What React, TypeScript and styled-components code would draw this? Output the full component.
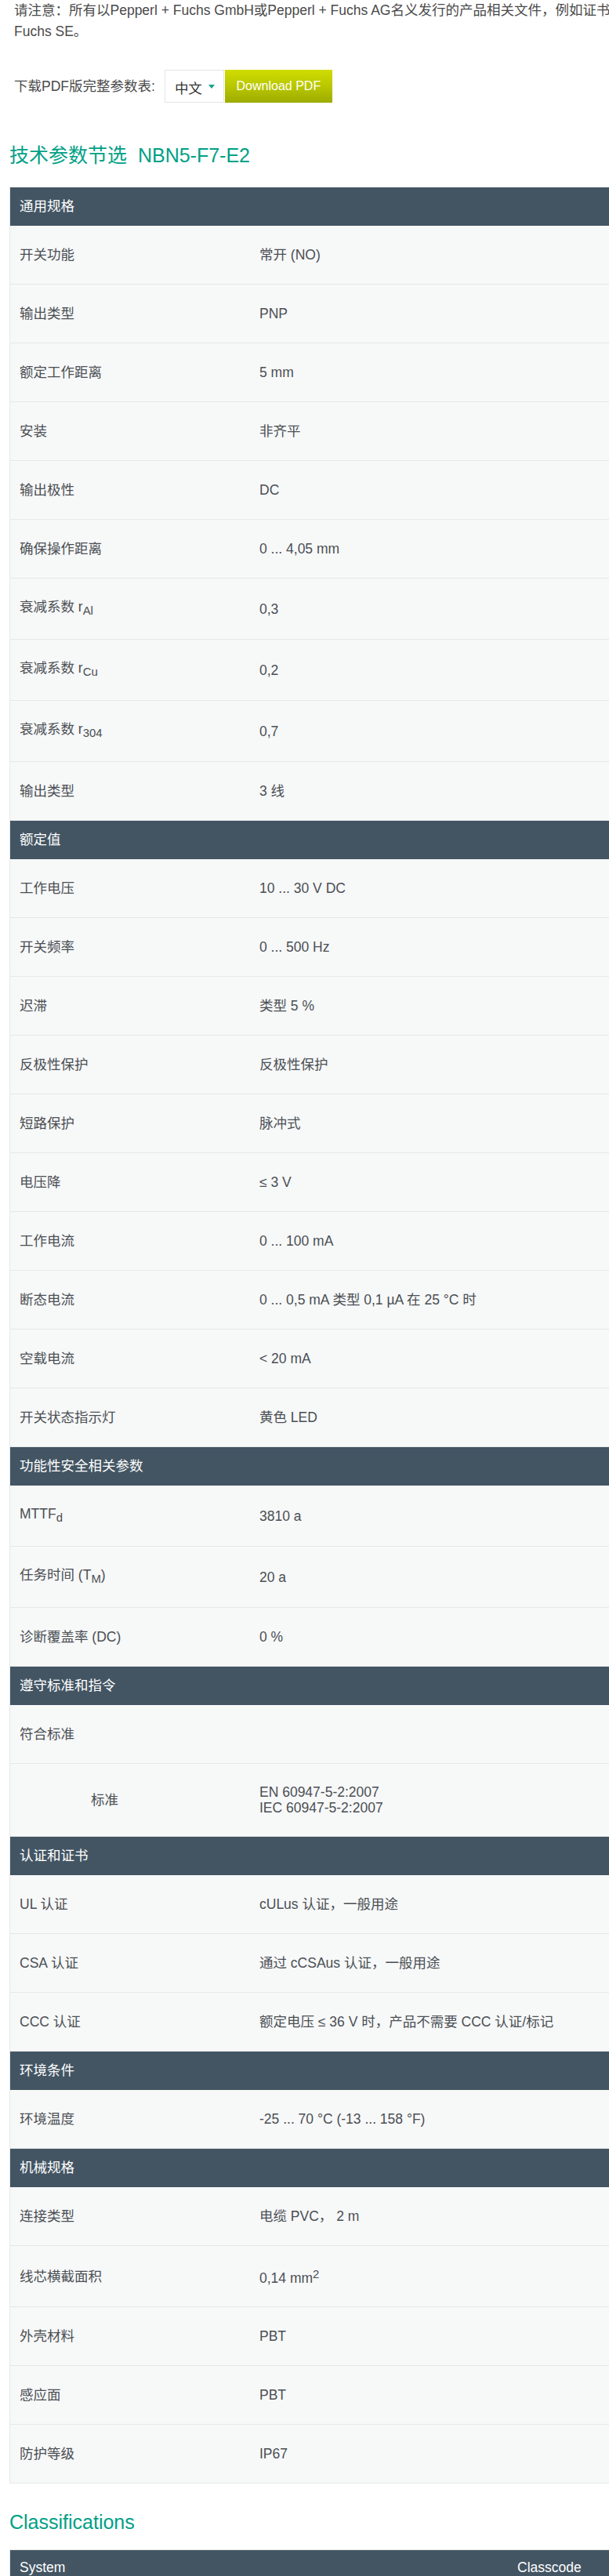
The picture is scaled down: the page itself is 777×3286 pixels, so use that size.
import React from 'react';
import styled, { createGlobalStyle } from 'styled-components';

const GlobalStyle = createGlobalStyle`
  html, body {
    margin: 0;
    padding: 0;
    overflow-x: hidden;
    background: #fff;
  }
  body {
    font-family: "Liberation Sans", "Noto Sans CJK SC", Arial, sans-serif;
    font-size: 17.5px;
    color: #4a4f54;
  }
`;

const Page = styled.div`
  width: 1000px;
  padding: 0 12px 40px;
`;

const Notice = styled.p`
  margin: 0 0 0 6px;
  line-height: 27px;
  white-space: nowrap;
  color: #4a4a4a;
`;

const DownloadRow = styled.div`
  display: flex;
  align-items: center;
  margin: 35px 0 0 6px;
`;

const DownloadLabel = styled.span`
  color: #4a4a4a;
  margin-right: 12px;
  margin-top: -3px;
`;

const LangSelect = styled.div`
  box-sizing: border-box;
  width: 76px;
  height: 42px;
  border: 1px solid #e4e4e4;
  background: #fff;
  display: flex;
  align-items: center;
  padding: 3px 0 0 12px;
  color: #333;
`;

const LangArrow = styled.span`
  width: 0;
  height: 0;
  margin-left: 8px;
  margin-top: -3px;
  border-left: 4px solid transparent;
  border-right: 4px solid transparent;
  border-top: 5px solid #17a08b;
`;

const DownloadButton = styled.button`
  box-sizing: border-box;
  width: 137px;
  height: 42px;
  margin-left: 1px;
  border: none;
  background: linear-gradient(to bottom, #d0dc00 0%, #b9c700 50%, #9dab00 100%);
  color: #fff;
  font-family: "Liberation Sans", Arial, sans-serif;
  font-size: 16px;
  cursor: pointer;
`;

const SectionTitle = styled.h2<{ $top: number; $bottom: number }>`
  margin: ${(p) => p.$top}px 0 ${(p) => p.$bottom}px;
  font-size: 25px;
  line-height: 30px;
  font-weight: normal;
  color: #00a085;
`;

const SpecTable = styled.div`
  border: 1px solid #e6e8e9;
  border-top: none;
  background: #f7f8f8;
`;

const GroupHeader = styled.div`
  background: #435563;
  color: #fff;
  padding: 14px 12px 15px;
  line-height: 20px;
`;

const SpecRow = styled.div`
  display: grid;
  grid-template-columns: 306px 1fr;
  align-items: center;
  min-height: 74px;
  border-bottom: 1px solid #e6e8e9;
  &:last-child {
    border-bottom: none;
  }
`;

const Cell = styled.div<{ $indent?: number }>`
  padding: 26px 12px 26px ${(p) => 12 + (p.$indent || 0)}px;
  line-height: 20px;
  color: #4a4f54;

  sub {
    font-size: 85%;
    vertical-align: -4px;
  }
  sup {
    font-size: 85%;
    vertical-align: 6px;
  }
`;

const ClassHeader = styled.div`
  display: grid;
  grid-template-columns: 635px 1fr;
  background: #435563;
  color: #fff;
  line-height: 20px;
  border: 1px solid #e6e8e9;
  border-bottom: none;
`;

const ClassHeadCell = styled.div`
  padding: 12px 12px 17px;
`;

type Row = { label: React.ReactNode; value?: React.ReactNode; indent?: number };
type Group = { title: string; rows: Row[] };

const groups: Group[] = [
  {
    title: '通用规格',
    rows: [
      { label: '开关功能', value: '常开 (NO)' },
      { label: '输出类型', value: 'PNP' },
      { label: '额定工作距离', value: '5 mm' },
      { label: '安装', value: '非齐平' },
      { label: '输出极性', value: 'DC' },
      { label: '确保操作距离', value: '0 ... 4,05 mm' },
      { label: <>衰减系数 r<sub>Al</sub></>, value: '0,3' },
      { label: <>衰减系数 r<sub>Cu</sub></>, value: '0,2' },
      { label: <>衰减系数 r<sub>304</sub></>, value: '0,7' },
      { label: '输出类型', value: '3 线' },
    ],
  },
  {
    title: '额定值',
    rows: [
      { label: '工作电压', value: '10 ... 30 V DC' },
      { label: '开关频率', value: '0 ... 500 Hz' },
      { label: '迟滞', value: '类型 5 %' },
      { label: '反极性保护', value: '反极性保护' },
      { label: '短路保护', value: '脉冲式' },
      { label: '电压降', value: '≤ 3 V' },
      { label: '工作电流', value: '0 ... 100 mA' },
      { label: '断态电流', value: '0 ... 0,5 mA 类型 0,1 µA 在 25 °C 时' },
      { label: '空载电流', value: '< 20 mA' },
      { label: '开关状态指示灯', value: '黄色 LED' },
    ],
  },
  {
    title: '功能性安全相关参数',
    rows: [
      { label: <>MTTF<sub>d</sub></>, value: '3810 a' },
      { label: <>任务时间 (T<sub>M</sub>)</>, value: '20 a' },
      { label: '诊断覆盖率 (DC)', value: '0 %' },
    ],
  },
  {
    title: '遵守标准和指令',
    rows: [
      { label: '符合标准' },
      {
        label: '标准',
        indent: 91,
        value: (
          <>
            EN 60947-5-2:2007
            <br />
            IEC 60947-5-2:2007
          </>
        ),
      },
    ],
  },
  {
    title: '认证和证书',
    rows: [
      { label: 'UL 认证', value: 'cULus 认证，一般用途' },
      { label: 'CSA 认证', value: '通过 cCSAus 认证，一般用途' },
      { label: 'CCC 认证', value: '额定电压 ≤ 36 V 时，产品不需要 CCC 认证/标记' },
    ],
  },
  {
    title: '环境条件',
    rows: [{ label: '环境温度', value: '-25 ... 70 °C (-13 ... 158 °F)' }],
  },
  {
    title: '机械规格',
    rows: [
      { label: '连接类型', value: '电缆 PVC， 2 m' },
      { label: '线芯横截面积', value: <>0,14 mm<sup>2</sup></> },
      { label: '外壳材料', value: 'PBT' },
      { label: '感应面', value: 'PBT' },
      { label: '防护等级', value: 'IP67' },
    ],
  },
];

const App = () => {
  return (
    <>
      <GlobalStyle />
      <Page>
        <Notice>
          请注意：所有以Pepperl + Fuchs GmbH或Pepperl + Fuchs AG名义发行的产品相关文件，例如证书、数据表和手册，其发行方现为 Pepperl +
          <br />
          Fuchs SE。
        </Notice>

        <DownloadRow>
          <DownloadLabel>下载PDF版完整参数表:</DownloadLabel>
          <LangSelect>
            中文
            <LangArrow />
          </LangSelect>
          <DownloadButton type="button">Download PDF</DownloadButton>
        </DownloadRow>

        <SectionTitle $top={52} $bottom={26}>
          技术参数节选{'\u00a0 '}NBN5-F7-E2
        </SectionTitle>

        <SpecTable>
          {groups.map((group) => (
            <React.Fragment key={group.title}>
              <GroupHeader>{group.title}</GroupHeader>
              {group.rows.map((row, i) => (
                <SpecRow key={i}>
                  <Cell $indent={row.indent}>{row.label}</Cell>
                  <Cell>{row.value}</Cell>
                </SpecRow>
              ))}
            </React.Fragment>
          ))}
        </SpecTable>

        <SectionTitle $top={34} $bottom={20}>
          Classifications
        </SectionTitle>

        <ClassHeader>
          <ClassHeadCell>System</ClassHeadCell>
          <ClassHeadCell>Classcode</ClassHeadCell>
        </ClassHeader>
      </Page>
    </>
  );
};

export default App;
